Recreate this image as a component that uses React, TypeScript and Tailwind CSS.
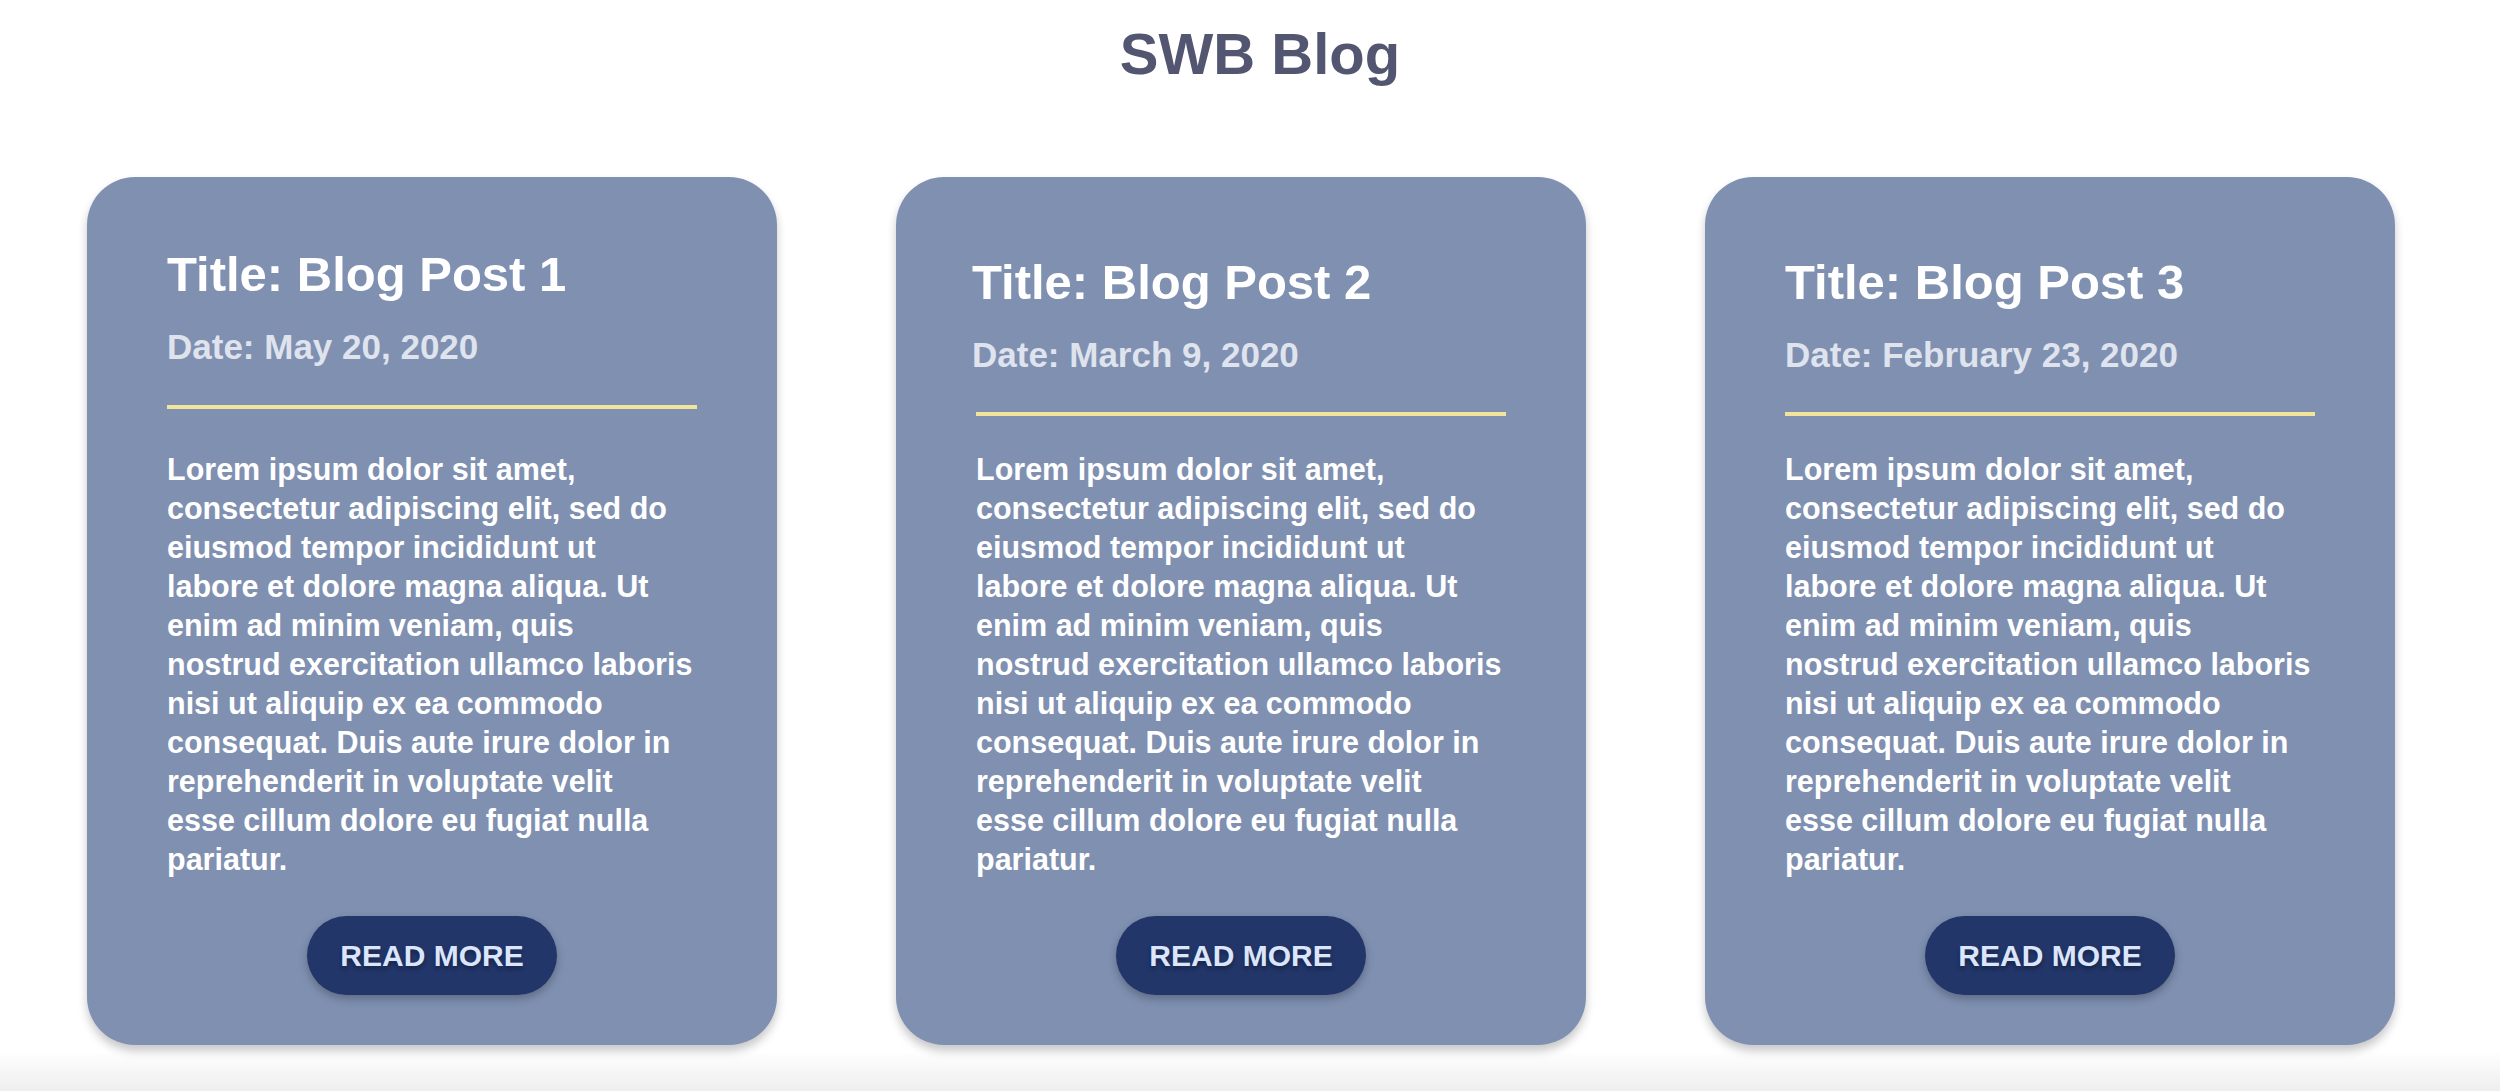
const posts = [
  { id: 1, title: "Title: Blog Post 1", date: "Date: May 20, 2020" },
  { id: 2, title: "Title: Blog Post 2", date: "Date: March 9, 2020" },
  { id: 3, title: "Title: Blog Post 3", date: "Date: February 23, 2020" },
];

// placeholder copy, broken the way the design comp wraps it
const excerpt = [
  "Lorem ipsum dolor sit amet,",
  "consectetur adipiscing elit, sed do",
  "eiusmod tempor incididunt ut",
  "labore et dolore magna aliqua. Ut",
  "enim ad minim veniam, quis",
  "nostrud exercitation ullamco laboris",
  "nisi ut aliquip ex ea commodo",
  "consequat. Duis aute irure dolor in",
  "reprehenderit in voluptate velit",
  "esse cillum dolore eu fugiat nulla",
  "pariatur.",
];

function PostCard({ title, date, index }: { title: string; date: string; index: number }) {
  const first = index === 0;

  return (
    <article
      className={
        "flex w-[690px] flex-col rounded-[48px] bg-[#7f90b1] px-[80px] pb-[50px] shadow-[0_6px_10px_rgba(0,0,0,0.22)] " +
        (first ? "pt-[67px]" : "pt-[75px]")
      }
    >
      <div className={index === 1 ? "-ml-[4px]" : ""}>
        <h2 className="text-[49px] font-bold leading-[60px] text-white">{title}</h2>
        <p className="mt-[23px] text-[35px] font-bold leading-[40px] text-[#dfe3ed]">{date}</p>
      </div>

      <div
        className={
          "h-[4px] w-full bg-[#f3e49c] " + (first ? "mt-[38px] mb-[41px]" : "mt-[37px] mb-[34px]")
        }
      />

      <p className="text-[30.5px] font-bold leading-[39px] text-white">
        {excerpt.map((line, i) => (
          <span key={i}>
            {line}
            {i < excerpt.length - 1 && <br />}
          </span>
        ))}
      </p>

      <button className="mx-auto mt-[37px] flex h-[79px] w-[250px] items-center justify-center rounded-full bg-[#22366a] text-[30px] font-bold leading-none text-[#dbe5fb] shadow-[0_4px_8px_rgba(0,0,0,0.25)] [text-shadow:0_3px_4px_rgba(0,0,0,0.35)]">
        READ MORE
      </button>
    </article>
  );
}

export default function App() {
  return (
    <div className="min-h-screen bg-white font-['Liberation_Sans',Arial,sans-serif]">
      <h1 className="pl-[20px] pt-[19px] text-center text-[58px] font-bold leading-[70px] text-[#535670]">
        SWB Blog
      </h1>

      <section className="mt-[88px] flex justify-between pl-[87px] pr-[105px]">
        {posts.map((post, i) => (
          <PostCard key={post.id} title={post.title} date={post.date} index={i} />
        ))}
      </section>

      <div className="mt-[6px] h-[40px] bg-linear-to-b from-white to-[#eeeeee]" />
    </div>
  );
}
